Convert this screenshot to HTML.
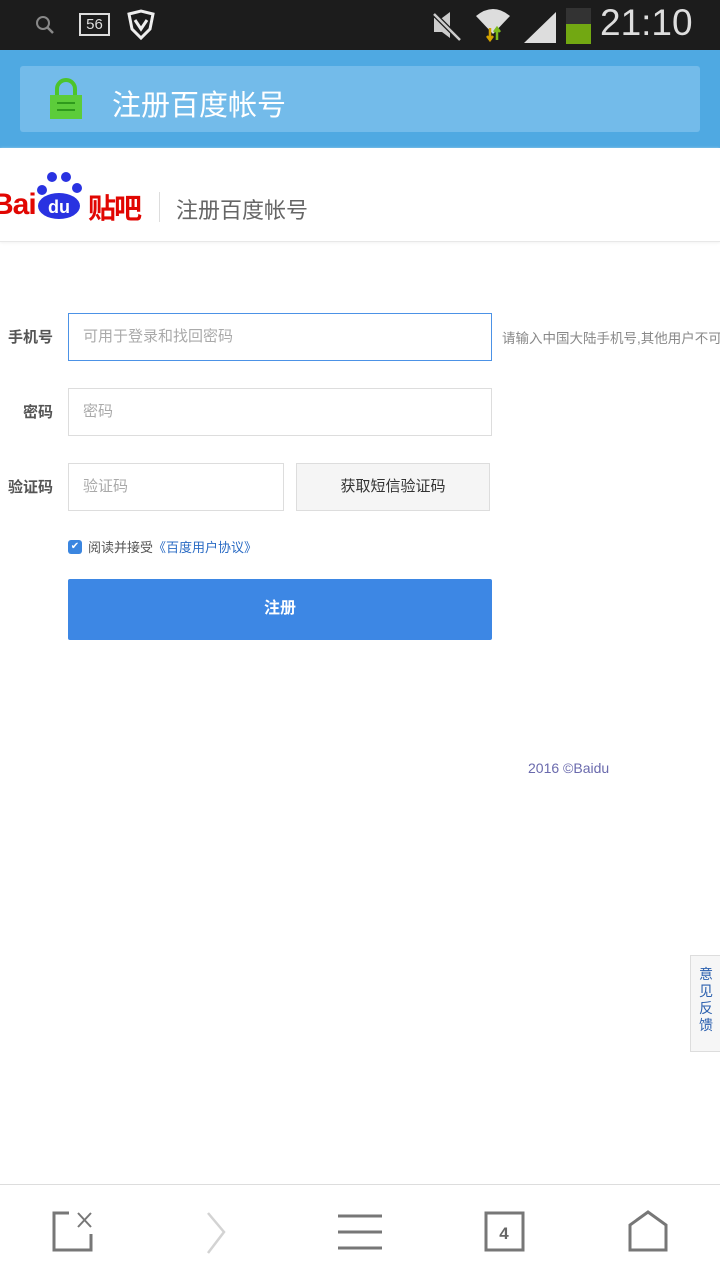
<!DOCTYPE html>
<html><head><meta charset="utf-8"><style>
*{margin:0;padding:0;box-sizing:border-box}
body{width:720px;height:1280px;position:relative;background:#fff;font-family:"Liberation Sans","Noto Sans CJK SC",sans-serif;overflow:hidden}
.a{position:absolute}
</style></head><body>
<div class="a" style="left:0;top:0;width:720px;height:50px;background:#1c1c1c"></div>
<svg class="a" style="top:10px;left:30px" width="30" height="30"><circle cx="13" cy="13" r="6" stroke="#888" stroke-width="2" fill="none"/><line x1="17" y1="17" x2="23" y2="23" stroke="#888" stroke-width="2.5"/></svg>
<div class="a" style="left:79px;top:13px;width:31px;height:23px;border:2px solid #ddd;color:#ddd;font-size:15px;text-align:center;line-height:19px">56</div>
<svg class="a" style="left:126px;top:9px" width="30" height="32"><path d="M3 5 L15 2 L27 5 L24 20 L15 29 L6 20 Z" stroke="#eee" stroke-width="3" fill="none"/><path d="M9 11 L15 20 L21 11" stroke="#eee" stroke-width="3" fill="none"/></svg>
<svg class="a" style="left:430px;top:10px" width="36" height="32"><path d="M4 8 L12 8 L20 2 L20 28 L12 22 L4 22 Z" fill="#ccc"/><line x1="4" y1="4" x2="30" y2="30" stroke="#1c1c1c" stroke-width="5"/><line x1="4" y1="4" x2="30" y2="30" stroke="#ccc" stroke-width="2.5"/></svg>
<svg class="a" style="left:474px;top:6px" width="38" height="38"><path d="M2 10 Q19 -4 36 10 L19 28 Z" fill="#ddd"/><path d="M16 22 v12 M13 30 l3 4 l3 -4" stroke="#d4a300" stroke-width="2.5" fill="none"/><path d="M23 34 v-12 M20 26 l3 -4 l3 4" stroke="#7cbb1e" stroke-width="2.5" fill="none"/></svg>
<svg class="a" style="left:522px;top:10px" width="36" height="34"><path d="M2 33 L34 2 L34 33 Z" fill="#ddd"/></svg>
<div class="a" style="left:566px;top:8px;width:25px;height:36px;background:#333"><div style="position:absolute;bottom:0;width:25px;height:20px;background:#72a812"></div></div>
<div class="a" style="left:600px;top:2px;font-size:37px;color:#ddd">21:10</div>

<div class="a" style="left:0;top:50px;width:720px;height:98px;background:#4fa9e2"></div>
<div class="a" style="left:20px;top:66px;width:680px;height:66px;background:#73bbea;border-radius:3px"></div>
<svg class="a" style="left:48px;top:78px" width="36" height="42"><path d="M9 18 V11 A9 9 0 0 1 27 11 V18" stroke="#4cc42c" stroke-width="4" fill="none"/><rect x="2" y="17" width="32" height="24" fill="#5ccc3a"/><line x1="9" y1="25" x2="27" y2="25" stroke="#2e9a1c" stroke-width="2"/><line x1="9" y1="32" x2="27" y2="32" stroke="#2e9a1c" stroke-width="2"/></svg>
<div class="a" style="left:112px;top:82px;font-size:29px;color:#fff">注册百度帐号</div>

<div class="a" style="left:0;top:148px;width:720px;height:94px;border-bottom:1px solid #e8e8e8;box-shadow:0 1px 3px #f2f2f2"></div>
<div class="a" style="left:-8px;top:188px;font-size:30px;font-weight:bold;color:#e10602;letter-spacing:-1px">Bai</div>
<svg class="a" style="left:32px;top:168px" width="56" height="52"><circle cx="10" cy="22" r="5" fill="#2932e1"/><circle cx="20" cy="9" r="5" fill="#2932e1"/><circle cx="34" cy="9" r="5" fill="#2932e1"/><circle cx="45" cy="20" r="5" fill="#2932e1"/><ellipse cx="27" cy="38" rx="21" ry="13" fill="#2932e1"/><text x="27" y="45" font-size="18" font-weight="bold" fill="#fff" text-anchor="middle" font-family="Liberation Sans">du</text></svg>
<div class="a" style="left:88px;top:187px;font-size:28px;font-weight:bold;color:#e10602;letter-spacing:-2px">贴吧</div>
<div class="a" style="left:159px;top:192px;width:1px;height:30px;background:#ddd"></div>
<div class="a" style="left:176px;top:193px;font-size:22px;color:#666">注册百度帐号</div>

<div class="a" style="left:8px;top:326px;font-size:15px;font-weight:bold;color:#555">手机号</div>
<div class="a" style="left:68px;top:313px;width:424px;height:48px;border:1px solid #4c92e6"></div>
<div class="a" style="left:83px;top:325px;font-size:15px;color:#aaa">可用于登录和找回密码</div>
<div class="a" style="left:502px;top:327px;font-size:13.5px;color:#888;white-space:nowrap">请输入中国大陆手机号,其他用户不可用</div>
<div class="a" style="left:23px;top:401px;font-size:15px;font-weight:bold;color:#555">密码</div>
<div class="a" style="left:68px;top:388px;width:424px;height:48px;border:1px solid #ddd"></div>
<div class="a" style="left:83px;top:400px;font-size:15px;color:#aaa">密码</div>
<div class="a" style="left:8px;top:476px;font-size:15px;font-weight:bold;color:#555">验证码</div>
<div class="a" style="left:68px;top:463px;width:216px;height:48px;border:1px solid #ddd"></div>
<div class="a" style="left:83px;top:475px;font-size:15px;color:#aaa">验证码</div>
<div class="a" style="left:296px;top:463px;width:194px;height:48px;border:1px solid #ddd;background:#f5f5f5;text-align:center;line-height:46px;font-size:15px;color:#333">获取短信验证码</div>
<div class="a" style="left:68px;top:540px;width:14px;height:14px;background:#3b86e0;border-radius:3px;color:#fff;font-size:10px;text-align:center;line-height:14px">✔</div>
<div class="a" style="left:88px;top:537px;font-size:13px;color:#555">阅读并接受<span style="color:#2a6bc4">《百度用户协议》</span></div>
<div class="a" style="left:68px;top:579px;width:424px;height:61px;background:#3d87e4;border-radius:2px;color:#fff;font-size:16px;font-weight:bold;text-align:center;line-height:60px">注册</div>

<div class="a" style="left:528px;top:760px;font-size:14px;color:#6a6aad">2016 ©Baidu</div>

<div class="a" style="left:690px;top:955px;width:32px;height:97px;background:#f6f6f6;border:1px solid #ddd;font-size:14px;color:#2a5fae;text-align:center;line-height:17px;padding-top:10px">意<br>见<br>反<br>馈</div>

<div class="a" style="left:0;top:1184px;width:720px;height:1px;background:#ddd"></div>
<svg class="a" style="left:0;top:1180px" width="720" height="100" fill="none" stroke="#777" stroke-width="3">
<path d="M69 33 H54 V70 H91 V54"/><path d="M78 33 L91 47 M91 33 L78 47" stroke-width="2"/>
<path d="M208 33 L224 52 L208 73" stroke="#d3d3d3" stroke-width="2.5"/>
<path d="M338 36 H382 M338 52 H382 M338 68 H382"/>
<rect x="486" y="33" width="37" height="37"/>
<text x="504" y="59" font-size="17" font-weight="bold" fill="#666" stroke="none" text-anchor="middle" font-family="Liberation Sans">4</text>
<path d="M630 70 V45 L648 32 L666 45 V70 Z"/>
</svg>
</body></html>
